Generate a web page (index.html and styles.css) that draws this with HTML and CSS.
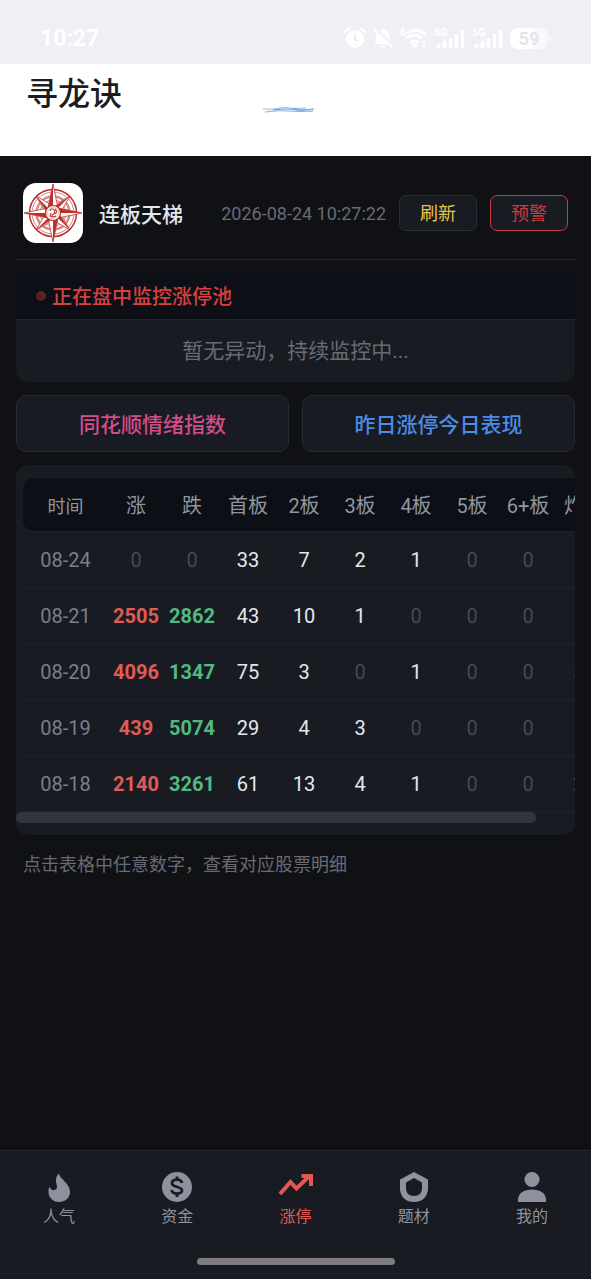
FILE: index.html
```html
<!DOCTYPE html>
<html lang="zh-CN">
<head>
  <meta charset="UTF-8">
  <meta name="viewport" content="width=device-width, initial-scale=1.0">
  <title>寻龙诀</title>
  <link rel="stylesheet" href="styles.css">
</head>
<body>

<!-- Phone status bar -->
<div class="status-bar">
  <span class="clock">10:27</span>
  <div class="status-icons">
    <svg width="22" height="22" viewBox="0 0 22 22">
      <path d="M1 5 5 1.500M21 5 17 1.500" stroke="#fff" stroke-width="2.500" stroke-linecap="round"/>
      <circle cx="11" cy="12" r="9" fill="#fff"/>
      <path d="M11 7v5.500l3 2" fill="none" stroke="#e6e5eb" stroke-width="1.500"/>
    </svg>
    <svg width="22" height="22" viewBox="0 0 22 22">
      <path d="M2 17c2-2 2-4 2-7 0-4 2-6 5-7 0-2 4-2 4 0 3 1 5 4 5 7s0 5 2 7zM8 18.500h6c-1 3-5 3-6 0z" fill="#fff"/>
      <path d="M3 1 21 19" stroke="#f0eff5" stroke-width="3"/>
      <path d="M1.500 2 20 20" stroke="#fff" stroke-width="2"/>
    </svg>
    <svg width="28" height="22" viewBox="0 0 28 22">
      <text class="tiny" x="0" y="9">6</text>
      <path d="M7 6q10-6 19 2M7 11q7.500-6 15 0M10.500 15.500q4-3 8 0" fill="none" stroke="#fff" stroke-width="3"/>
      <path d="m11 17 3.500 4 3.500-4q-3.500-2-7 0zM22 16l2-3 2 3zM22 18l2 3 2-3z" fill="#fff"/>
    </svg>
    <svg width="32" height="22" viewBox="0 0 32 22">
      <text class="tiny" x="0" y="9">5G</text>
      <path d="M4.500 21v-4M10.500 21v-7M16.500 21v-10M22.500 21V7M28.500 21V3" stroke="#fff" stroke-width="3.500"/>
    </svg>
    <svg width="32" height="22" viewBox="0 0 32 22">
      <text class="tiny" x="0" y="9">5G</text>
      <path d="M4.500 21v-4M10.500 21v-7M16.500 21v-10M22.500 21V7M28.500 21V3" stroke="#fff" stroke-width="3.500"/>
    </svg>
    <div class="battery-wrap"><span class="battery">59</span><i class="battery-tip"></i></div>
  </div>
</div>

<!-- App title -->
<header class="app-header">
  <h1>寻龙诀</h1>
  <svg class="scribble" width="52" height="8" viewBox="0 0 52 8" fill="none">
    <path d="M0 3q9 1 17-1 6-1 10 0t16 0" stroke="#8fbbe8"/>
    <path d="M2 6q14-2 25-1t15 0" stroke="#7fb3e8"/>
    <path d="M10 4q16-2 24 0 8 0 17-1M30 2q8 4 20 3" stroke="#5d9fe2"/>
  </svg>
</header>

<main class="container">
  <div class="page-head">
    <svg class="logo" viewBox="0 0 60 60">
      <rect width="60" height="60" rx="13" fill="#fff"/>
      <g fill="none" stroke="#b9312d">
        <circle cx="30" cy="30" r="23.500" stroke-width="1.500"/>
        <circle cx="30" cy="30" r="21" stroke-width=".6"/>
        <circle cx="30" cy="30" r="16.500" stroke="#d88a86" stroke-width="2.500"/>
        <circle cx="30" cy="30" r="13" stroke-width=".6"/>
      </g>
      <g fill="#fff" stroke="#b9312d" stroke-width=".8">
        <path d="M13 13 32 24 24 32zM47 13 28 24 36 32zM13 47 24 28 32 36zM47 47 36 28 28 36z"/>
        <path d="M30 1 35 25 59 30 35 35 30 59 25 35 1 30 25 25z"/>
      </g>
      <path fill="#b9312d" d="M30 1v29l-5-5zM59 30H30l5-5zM30 59V30l5 5zM1 30h29l-5 5zM13 13l14 14-4 1zM47 13 33 27l-1-4zM47 47 33 33l4-1zM13 47l14-14 1 4z"/>
      <circle cx="30" cy="30" r="7.500" fill="#fff" stroke="#b9312d" stroke-width="1.200"/>
      <circle cx="30" cy="30" r="5.500" fill="none" stroke="#d88a86" stroke-width=".6"/>
      <path d="M27 28q2-4 4-1t-2 5q0 3 4 1M32 26q3 3 0 5M28 30q-2 3 1 4" fill="none" stroke="#b9312d" stroke-width="1.100"/>
    </svg>
    <h2>连板天梯</h2>
    <span class="time">2026-08-24 10:27:22</span>
    <button class="btn refresh" type="button">刷新</button>
    <button class="btn alert" type="button">预警</button>
  </div>

  <!-- Monitor panel -->
  <section class="monitor">
    <div class="monitor-title"><span class="dot"></span>正在盘中监控涨停池</div>
    <p class="monitor-empty">暂无异动，持续监控中...</p>
  </section>

  <div class="links">
    <button class="link-btn pink" type="button">同花顺情绪指数</button>
    <button class="link-btn blue" type="button">昨日涨停今日表现</button>
  </div>

  <!-- Ladder table -->
  <section class="ladder">
    <div class="table-scroll">
      <table class="ladder-table">
        <thead>
          <tr>
            <th class="date">时间</th>
            <th>涨</th>
            <th>跌</th>
            <th>首板</th>
            <th>2板</th>
            <th>3板</th>
            <th>4板</th>
            <th>5板</th>
            <th>6+板</th>
            <th>炸板</th>
          </tr>
        </thead>
        <tbody>
          <tr>
            <td class="date">08-24</td>
            <td class="zero">0</td>
            <td class="zero">0</td>
            <td>33</td>
            <td>7</td>
            <td>2</td>
            <td>1</td>
            <td class="zero">0</td>
            <td class="zero">0</td>
            <td class="zero">0</td>
          </tr>
          <tr>
            <td class="date">08-21</td>
            <td class="up">2505</td>
            <td class="down">2862</td>
            <td>43</td>
            <td>10</td>
            <td>1</td>
            <td class="zero">0</td>
            <td class="zero">0</td>
            <td class="zero">0</td>
            <td class="zero">0</td>
          </tr>
          <tr>
            <td class="date">08-20</td>
            <td class="up">4096</td>
            <td class="down">1347</td>
            <td>75</td>
            <td>3</td>
            <td class="zero">0</td>
            <td>1</td>
            <td class="zero">0</td>
            <td class="zero">0</td>
            <td class="zero">50</td>
          </tr>
          <tr>
            <td class="date">08-19</td>
            <td class="up">439</td>
            <td class="down">5074</td>
            <td>29</td>
            <td>4</td>
            <td>3</td>
            <td class="zero">0</td>
            <td class="zero">0</td>
            <td class="zero">0</td>
            <td class="zero">0</td>
          </tr>
          <tr>
            <td class="date">08-18</td>
            <td class="up">2140</td>
            <td class="down">3261</td>
            <td>61</td>
            <td>13</td>
            <td>4</td>
            <td>1</td>
            <td class="zero">0</td>
            <td class="zero">0</td>
            <td class="zero">20</td>
          </tr>
        </tbody>
      </table>
    </div>
    <div class="scroll-thumb"></div>
  </section>

  <p class="hint">点击表格中任意数字，查看对应股票明细</p>
</main>

<!-- Bottom tabs -->
<footer class="bottom">
  <nav class="tabs">
    <a class="tab" href="#hot">
      <svg viewBox="0 0 36 36"><path d="M18 4.500c1 6 11 9.500 11 18.500 0 6-5 10-11 10S7.500 28.500 7.500 23c0-2 0-3.500 1-5 1 2.500 3 3.500 5 3 3.500-1 2.500-3.500 2-6-1-4-.5-8 2.500-10.500z"/></svg>
      <span>人气</span>
    </a>
    <a class="tab" href="#money">
      <svg viewBox="0 0 36 36">
        <circle cx="18" cy="18" r="15"/>
        <path d="M23 14c-1-5-10-4-10 0 0 5 10 3 10 7.500 0 4-9.500 4.500-10.500-.5M18 7.500v4M18 24v4" fill="none" stroke="#181b22" stroke-width="2.800"/>
      </svg>
      <span>资金</span>
    </a>
    <a class="tab active" href="#limit">
      <svg viewBox="0 0 36 36"><path d="m2 25 10.500-12 6 6.500L31 7.500M23.500 7H33v10" fill="none" stroke="currentColor" stroke-width="4"/></svg>
      <span>涨停</span>
    </a>
    <a class="tab" href="#theme">
      <svg viewBox="0 0 36 36"><path fill-rule="evenodd" d="m18 3 14 7.500V19c0 8-5 14-14 14S4 27 4 19v-8.500zM18 9l-8 4.500V19c0 5 3 8 8 8s8-3 8-8v-5.500z"/></svg>
      <span>题材</span>
    </a>
    <a class="tab" href="#me">
      <svg viewBox="0 0 36 36"><circle cx="18" cy="10.500" r="7.500"/><path d="M4 33v-2c0-7 6-10.500 14-10.500S32 24 32 31v2z"/></svg>
      <span>我的</span>
    </a>
  </nav>
  <div class="home-bar"></div>
</footer>

</body>
</html>
```
FILE: styles.css
```css
/* Basic reset */
* {
  margin: 0;
  padding: 0;
  box-sizing: border-box;
}

body {
  display: flex;
  flex-direction: column;
  min-height: 100vh;
  font-family: Roboto, "Noto Sans CJK SC", sans-serif;
  background-color: #101115;
  color: #e4e7ee;
}

button {
  font-family: inherit;
  cursor: pointer;
}

/* Status bar */
.status-bar {
  display: flex;
  justify-content: space-between;
  align-items: center;
  height: 64px;
  padding: 12px 40px 0;
  background-color: #f0eff5;
  color: #fff;
}

.clock {
  font-size: 23px;
  font-weight: 700;
}

.status-icons {
  display: flex;
  align-items: center;
  gap: 6px;
}

.tiny {
  font-size: 11px;
  font-weight: 700;
  fill: #fff;
}

.battery-wrap {
  display: flex;
  align-items: center;
  gap: 1px;
}

.battery {
  width: 38px;
  border-radius: 8px;
  background: linear-gradient(90deg, #fff 60%, #f9f9fb 60%);
  color: #e6e5eb;
  font-size: 18px;
  font-weight: 700;
  line-height: 21px;
  text-align: center;
}

.battery-tip {
  width: 2px;
  height: 6px;
  border-radius: 1px;
  background-color: #f9f9fb;
}

/* App title */
.app-header {
  position: relative;
  height: 92px;
  padding: 6px 26px;
  background-color: #fff;
  color: #1b1d22;
}

.app-header h1 {
  font-size: 32px;
  font-weight: 500;
  line-height: 48px;
}

.scribble {
  position: absolute;
  left: 263px;
  top: 42px;
}

/* Main container */
.container {
  padding: 16px;
}

.page-head {
  display: flex;
  align-items: center;
  padding: 11px 7px 16px;
  border-bottom: 1px solid #252832;
}

.logo {
  width: 60px;
  height: 60px;
  margin-right: 16px;
  flex: none;
}

.page-head h2 {
  font-size: 21px;
  font-weight: 500;
  white-space: nowrap;
}

.time {
  margin-left: auto;
  color: #686b73;
  font-size: 18px;
  white-space: nowrap;
}

.btn {
  width: 78px;
  height: 36px;
  margin-left: 13px;
  padding-bottom: 2px;
  border: 1px solid #2b2e37;
  border-radius: 7px;
  background-color: #181b22;
  font-size: 18px;
  flex: none;
}

.refresh {
  color: #e5c747;
}

.alert {
  border-color: #c93c3e;
  color: #c93c3e;
}

/* Monitor panel */
.monitor {
  margin-top: 12px;
  border-radius: 12px;
  background-color: #181b22;
  overflow: hidden;
}

.monitor-title {
  display: flex;
  align-items: center;
  gap: 6px;
  height: 48px;
  padding-left: 20px;
  border-bottom: 1px solid #23262e;
  background-color: #0c0f16;
  color: #d83f3e;
  font-size: 20px;
  font-weight: 500;
}

.dot {
  width: 10px;
  height: 10px;
  border-radius: 50%;
  background-color: #5c2023;
}

.monitor-empty {
  color: #686b73;
  font-size: 21px;
  line-height: 62px;
  text-align: center;
}

/* Two link buttons */
.links {
  display: flex;
  gap: 13px;
  margin: 13px 0;
}

.link-btn {
  flex: 1;
  height: 57px;
  padding-bottom: 2px;
  border: 1px solid #272a34;
  border-radius: 10px;
  background-color: #181b22;
  font-size: 21px;
  font-weight: 500;
}

.pink {
  color: #d14e89;
}

.blue {
  color: #4c8ce6;
}

/* Ladder table */
.ladder {
  padding: 13px 0 12px;
  border-radius: 12px;
  background-color: #181b22;
  overflow: hidden;
}

.table-scroll {
  padding: 0 7px;
  overflow-x: auto;
  scrollbar-width: none;
}

.ladder-table {
  width: 589px;
  table-layout: fixed;
  border-collapse: separate;
  border-spacing: 0;
  font-size: 20px;
  text-align: center;
}

.ladder-table th,
.ladder-table td {
  height: 56px;
  border-bottom: 1px solid #20232b;
  white-space: nowrap;
}

.ladder-table th {
  height: 54px;
  background-color: #0c0f16;
  color: #92959d;
  font-weight: 400;
}

.ladder-table th:first-child {
  border-radius: 10px 0 0 10px;
}

.ladder-table .date {
  width: 85px;
  color: #7c7f87;
}

.ladder-table th.date {
  color: #92959d;
  font-size: 18px;
}

.ladder-table .zero {
  color: #454850;
}

.ladder-table .up {
  color: #e25a56;
  font-weight: 700;
}

.ladder-table .down {
  color: #52b981;
  font-weight: 700;
}

.scroll-thumb {
  width: 93%;
  height: 11px;
  border-radius: 6px;
  background-color: #32353d;
}

.hint {
  padding: 16px 7px;
  color: #686b73;
  font-size: 18px;
  line-height: 27px;
}

/* Bottom tabs */
.bottom {
  margin-top: auto;
  border-top: 1px solid #252830;
  background-color: #181b22;
}

.tabs {
  display: flex;
  padding: 18px 0 29px;
}

.tab {
  display: flex;
  flex: 1;
  flex-direction: column;
  align-items: center;
  color: #8d929e;
  font-size: 16px;
  line-height: 24px;
  text-decoration: none;
}

.tab svg {
  width: 36px;
  height: 36px;
  fill: currentColor;
}

.tab.active {
  color: #e35855;
}

.home-bar {
  width: 198px;
  height: 7px;
  margin: 0 auto 14px;
  border-radius: 4px;
  background-color: #7e7b81;
}
```
